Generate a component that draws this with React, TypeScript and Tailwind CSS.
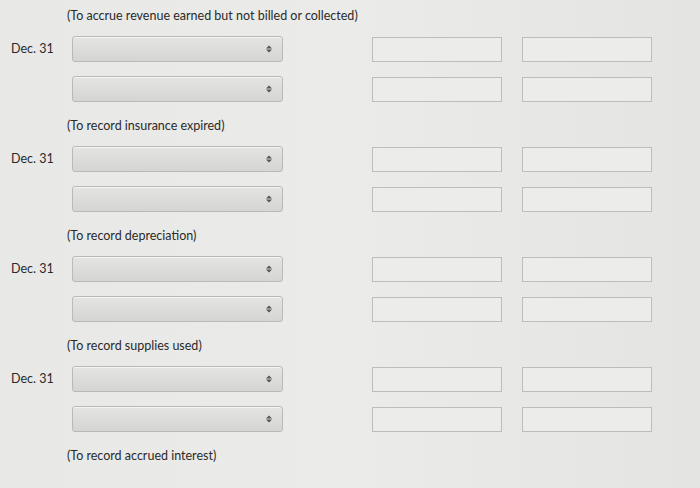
import React from 'react';

const sections = [
  'To accrue revenue earned but not billed or collected',
  'To record insurance expired',
  'To record depreciation',
  'To record supplies used',
];

const SelectBox: React.FC = () => (
  <div className="relative h-[26px] w-[211px] rounded-[3px] border border-[#b9b9b7] bg-gradient-to-b from-[#e4e4e2] to-[#d5d5d3] shadow-[inset_0_1px_0_rgba(255,255,255,0.6)]">
    <div className="absolute right-[10px] top-1/2 flex -translate-y-1/2 flex-col items-center gap-[1px]">
      <div className="h-0 w-0 border-x-[3px] border-b-[3px] border-x-transparent border-b-[#555]" />
      <div className="h-0 w-0 border-x-[3px] border-t-[3px] border-x-transparent border-t-[#555]" />
    </div>
  </div>
);

const AmountBox: React.FC = () => (
  <div className="h-[25px] w-[130px] border border-[#bdbdbb] bg-[#ececea]" />
);

const EntryRow: React.FC<{ label?: string }> = ({ label }) => (
  <div className="flex h-[26px] items-center">
    <div className="w-[61px] text-[12.5px] text-[#2a2a2a]">{label}</div>
    <SelectBox />
    <div className="ml-[89px] flex gap-[20px]">
      <AmountBox />
      <AmountBox />
    </div>
  </div>
);

export default function App() {
  return (
    <div
      className="h-[488px] w-[700px] overflow-hidden bg-gradient-to-r from-[#e8e8e6] via-[#ebebe9] to-[#e4e4e2] pl-[11px] pt-[6px]"
      style={{ fontFamily: 'Lato, "Noto Sans", sans-serif' }}
    >
      {sections.map((s) => (
        <div key={s}>
          <div className="flex h-5 items-center pl-[56px] text-[12.5px] text-[#2a2a2a]">({s})</div>
          <div className="mt-[10px]">
            <EntryRow label="Dec. 31" />
          </div>
          <div className="mb-[14px] mt-[14px]">
            <EntryRow />
          </div>
        </div>
      ))}
      <div className="flex h-5 items-center pl-[56px] text-[12.5px] text-[#2a2a2a]">(To record accrued interest)</div>
    </div>
  );
}
